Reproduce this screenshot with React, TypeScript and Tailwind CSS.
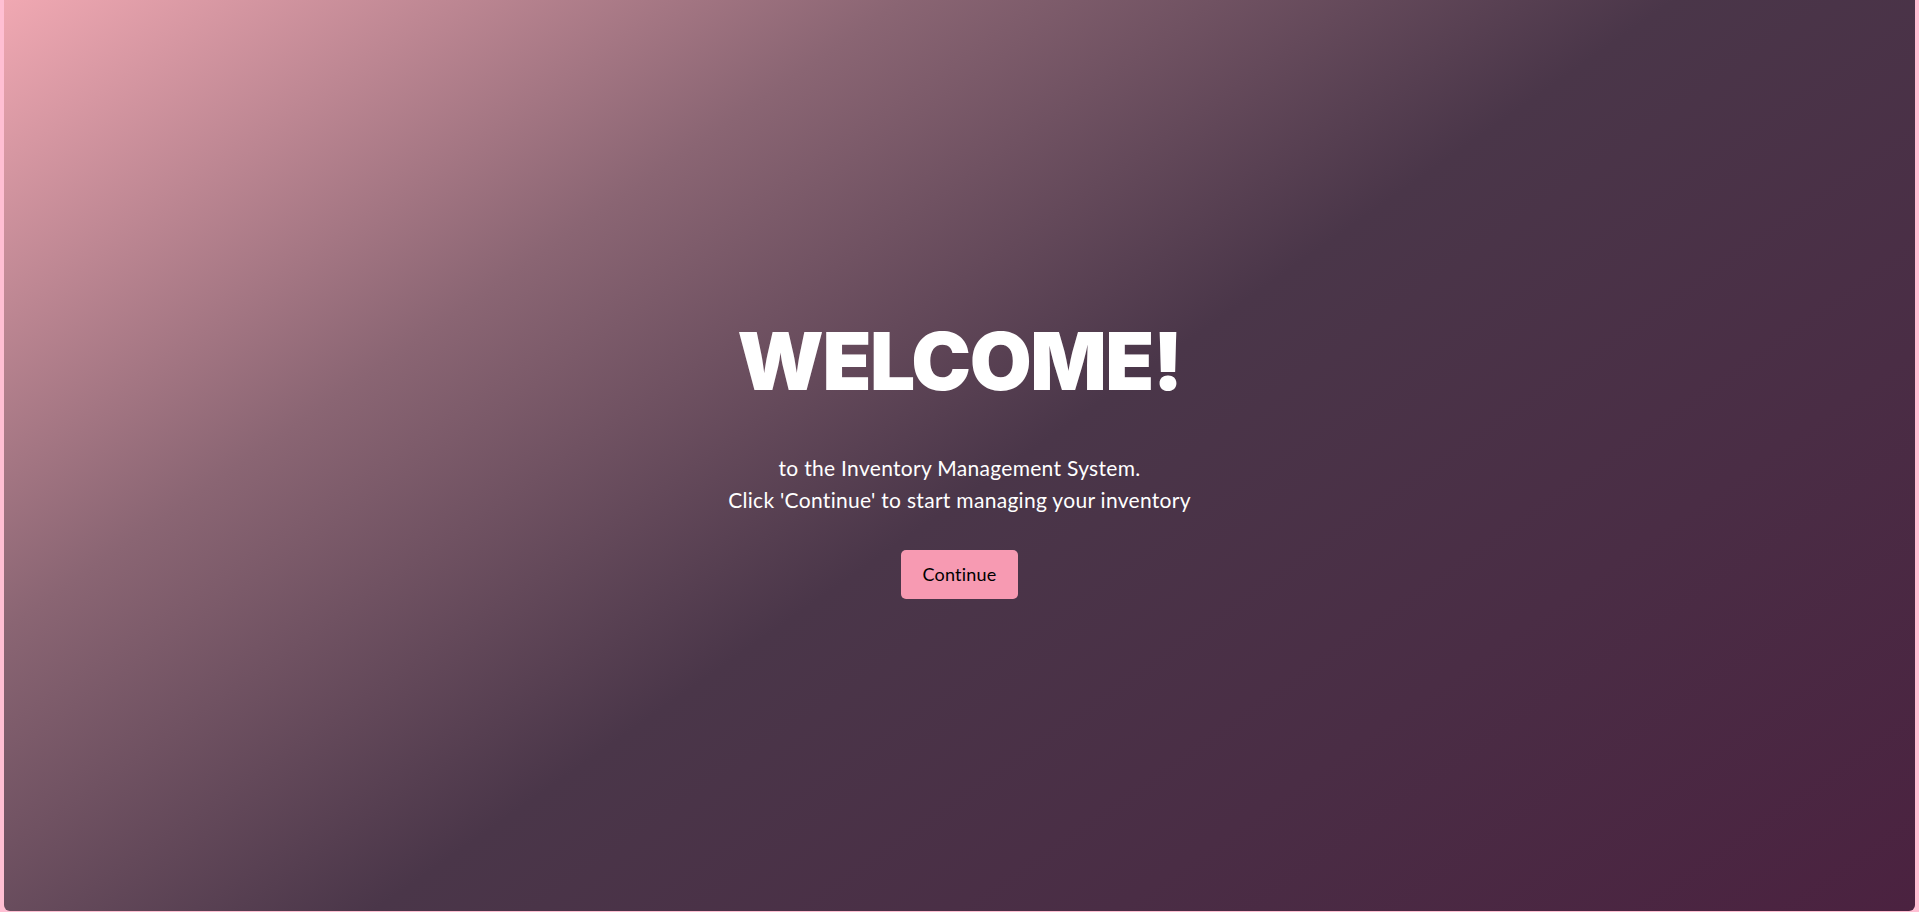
import React from 'react';

const App: React.FC = () => {
  return (
    <div className="min-h-screen w-full bg-[#ffbfd3] px-[4px]">
      <section className="h-[911px] w-full rounded-b-md bg-[linear-gradient(145deg,#f0a8b2_0%,#8a6573_28%,#4a3649_52%,#4a2d45_75%,#4b2240_100%)] flex flex-col items-center justify-center text-white">
        <div className="flex flex-col items-center pt-[8px]">
          {/* Title */}
          <h1 className="font-['Inter','Liberation_Sans',sans-serif] font-black text-[80px] leading-none tracking-[-1.5px] mb-[51px]">
            WELCOME!
          </h1>

          <p className="font-['Lato','Open_Sans',sans-serif] text-[21px] leading-[32px] tracking-[0.3px] text-center">
            to the Inventory Management System.
            <br />
            Click 'Continue' to start managing your inventory
          </p>

          <button className="mt-[34px] h-[49px] px-[22px] rounded-[5px] bg-[#f79ab2] text-black font-['Lato','Open_Sans',sans-serif] text-[18px] tracking-[0.2px]">
            Continue
          </button>
        </div>
      </section>
    </div>
  );
};

export default App;
